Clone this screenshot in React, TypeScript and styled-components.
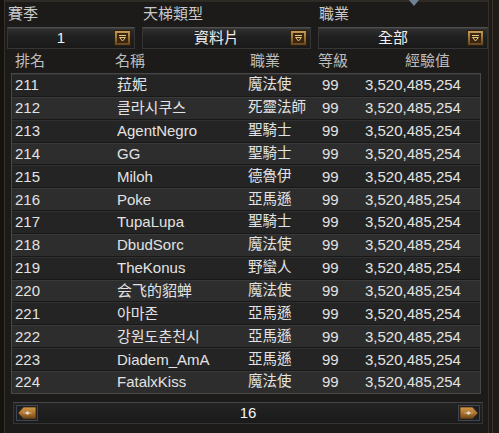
import React from 'react';
import styled, { createGlobalStyle } from 'styled-components';

const Global = createGlobalStyle`
  html, body { margin: 0; padding: 0; background: #1a1917; }
  body { width: 499px; height: 433px; overflow: hidden; }
`;

const Frame = styled.div`
  position: relative;
  width: 499px;
  height: 433px;
  box-sizing: border-box;
  padding-left: 7px;
  display: flex;
  flex-direction: column;
  background: #1c1b19;
  box-shadow: inset 4px 0 0 #15130f, inset 5px 0 0 #37312a,
    inset -6px 0 0 #1f1b16, inset -7px 0 0 #3a352d,
    inset -10px 0 0 #1d1a15, inset -11px 0 0 #35302a,
    inset 0 2px 0 #2e2a25;
  font-family: "Liberation Sans", "Noto Sans CJK TC", sans-serif;
  color: #dedede;
`;

const TopNotch = styled.div`
  position: absolute;
  left: 409px;
  top: 0;
  width: 0;
  height: 0;
  border-left: 5px solid transparent;
  border-right: 5px solid transparent;
  border-top: 6px solid #6f8295;
`;

const FilterRow = styled.div`
  display: grid;
  grid-template-columns: 128px 169px 170px;
  column-gap: 7px;
`;

const FilterGroup = styled.div`
  display: flex;
  flex-direction: column;
`;

const FilterLabel = styled.div`
  padding: 5px 0 0 1px;
  height: 18px;
  line-height: 18px;
  font-size: 15px;
  color: #c9c9c9;
`;

const Select = styled.div`
  margin-top: 4px;
  height: 22px;
  box-sizing: border-box;
  display: flex;
  align-items: center;
  border: 1px solid #353535;
  border-top-color: #4e4e4e;
  background: linear-gradient(#303030, #202020 45%, #191919);
  box-shadow: inset 0 1px 0 #3e3e3e;
`;

const SelectValue = styled.div`
  flex: 1;
  text-align: center;
  font-size: 15px;
  line-height: 20px;
  color: #f2f2f2;
`;

const SelectButton = styled.svg`
  display: block;
  margin-right: 3px;
  flex: none;
`;

const HeaderRow = styled.div`
  margin: 3px 0 0 4px;
  padding-left: 4px;
  height: 18px;
  display: grid;
  grid-template-columns: 100px 135px 68px 87px 1fr;
  font-size: 15px;
  line-height: 18px;
  color: #bdbdbd;
`;

const Table = styled.div`
  margin: 3px 0 0 4px;
  width: 470px;
  box-sizing: border-box;
  border: 1px solid #474747;
  background: #1e1e1e;
  display: flex;
  flex-direction: column;
`;

const Row = styled.div<{ $alt: boolean }>`
  height: 21.85px;
  box-sizing: content-box;
  padding-left: 3px;
  display: grid;
  grid-template-columns: 102px 131px 74px 43px 1fr;
  align-items: center;
  font-size: 15px;
  line-height: 21px;
  color: #e2e2e2;
  background: ${p => (p.$alt ? '#2d2d2d' : '#242424')};
  border-bottom: 1px solid #181818;
  box-shadow: inset 0 1px 0 ${p => (p.$alt ? '#3a3a3a' : '#303030')};
  &:last-child { border-bottom: none; }
`;

const Cell = styled.div`
  white-space: nowrap;
  overflow: hidden;
`;

const CjkCell = styled(Cell)`
  font-size: 14.5px;
`;

const Pager = styled.div`
  margin: 8px 0 0 6px;
  width: 470px;
  height: 22px;
  box-sizing: border-box;
  display: flex;
  align-items: center;
  padding: 0 2px;
  border: 1px solid #343434;
  border-top-color: #454545;
  background: linear-gradient(#232323, #1a1a1a);
`;

const PageNumber = styled.div`
  flex: 1;
  text-align: center;
  font-size: 15px;
  line-height: 20px;
  color: #f4f4f4;
`;

const ArrowButton = styled.svg`
  display: block;
  flex: none;
`;

const DropIcon: React.FC<{ id: string }> = ({ id }) => (
  <SelectButton width="17" height="16" viewBox="0 0 17 16">
    <defs>
      <linearGradient id={id} x1="0" y1="0" x2="0" y2="1">
        <stop offset="0" stopColor="#caa058" />
        <stop offset="0.5" stopColor="#9a7236" />
        <stop offset="1" stopColor="#5e411a" />
      </linearGradient>
    </defs>
    <rect x="0.5" y="0.5" width="16" height="15" fill={`url(#${id})`} stroke="#2e2010" />
    <rect x="3" y="3" width="11" height="10" fill="#3a2610" />
    <path d="M5 5.5 H12" stroke="#e6c784" strokeWidth="1" />
    <path d="M5.6 7.5 L11.4 7.5 L8.5 11 Z" fill="none" stroke="#e6c784" strokeWidth="1" />
  </SelectButton>
);

const PagerArrow: React.FC<{ dir: 'left' | 'right'; id: string }> = ({ dir, id }) => (
  <ArrowButton width="22" height="16" viewBox="0 0 22 16">
    <defs>
      <linearGradient id={id} x1="0" y1="0" x2="0" y2="1">
        <stop offset="0" stopColor="#d49a4a" />
        <stop offset="0.55" stopColor="#a8702e" />
        <stop offset="1" stopColor="#6a4418" />
      </linearGradient>
    </defs>
    <rect x="0.5" y="0.5" width="21" height="15" fill="#1c1e22" stroke="#3d4652" />
    <g transform={dir === 'right' ? 'translate(22 0) scale(-1 1)' : undefined}>
      <path d="M2 8 L7.5 2 L20 2 L20 14 L7.5 14 Z" fill={`url(#${id})`} stroke="#3a2610" strokeWidth="0.8" />
      <path d="M9 8 L11.5 6 L14 8 L11.5 10 Z" fill="#e8e2d6" opacity="0.85" />
      <path d="M7 8 H16" stroke="#f0e6d0" strokeWidth="0.7" opacity="0.6" />
    </g>
  </ArrowButton>
);

const rows: [string, string, string][] = [
  ['211', '菈妮', '魔法使'],
  ['212', '클라시쿠스', '死靈法師'],
  ['213', 'AgentNegro', '聖騎士'],
  ['214', 'GG', '聖騎士'],
  ['215', 'Miloh', '德魯伊'],
  ['216', 'Poke', '亞馬遜'],
  ['217', 'TupaLupa', '聖騎士'],
  ['218', 'DbudSorc', '魔法使'],
  ['219', 'TheKonus', '野蠻人'],
  ['220', '会飞的貂蝉', '魔法使'],
  ['221', '아마존', '亞馬遜'],
  ['222', '강원도춘천시', '亞馬遜'],
  ['223', 'Diadem_AmA', '亞馬遜'],
  ['224', 'FatalxKiss', '魔法使'],
];

export default function App() {
  return (
    <>
      <Global />
      <Frame>
        <TopNotch />
        <FilterRow>
          <FilterGroup>
            <FilterLabel>賽季</FilterLabel>
            <Select>
              <SelectValue>1</SelectValue>
              <DropIcon id="dd1" />
            </Select>
          </FilterGroup>
          <FilterGroup>
            <FilterLabel>天梯類型</FilterLabel>
            <Select>
              <SelectValue>資料片</SelectValue>
              <DropIcon id="dd2" />
            </Select>
          </FilterGroup>
          <FilterGroup>
            <FilterLabel>職業</FilterLabel>
            <Select>
              <SelectValue>全部</SelectValue>
              <DropIcon id="dd3" />
            </Select>
          </FilterGroup>
        </FilterRow>
        <HeaderRow>
          <div>排名</div>
          <div>名稱</div>
          <div>職業</div>
          <div>等級</div>
          <div>經驗值</div>
        </HeaderRow>
        <Table>
          {rows.map(([rank, name, cls], i) => (
            <Row key={rank} $alt={i % 2 === 1}>
              <Cell>{rank}</Cell>
              <Cell>{name}</Cell>
              <CjkCell>{cls}</CjkCell>
              <Cell>99</Cell>
              <Cell>3,520,485,254</Cell>
            </Row>
          ))}
        </Table>
        <Pager>
          <PagerArrow dir="left" id="pl" />
          <PageNumber>16</PageNumber>
          <PagerArrow dir="right" id="pr" />
        </Pager>
      </Frame>
    </>
  );
}
